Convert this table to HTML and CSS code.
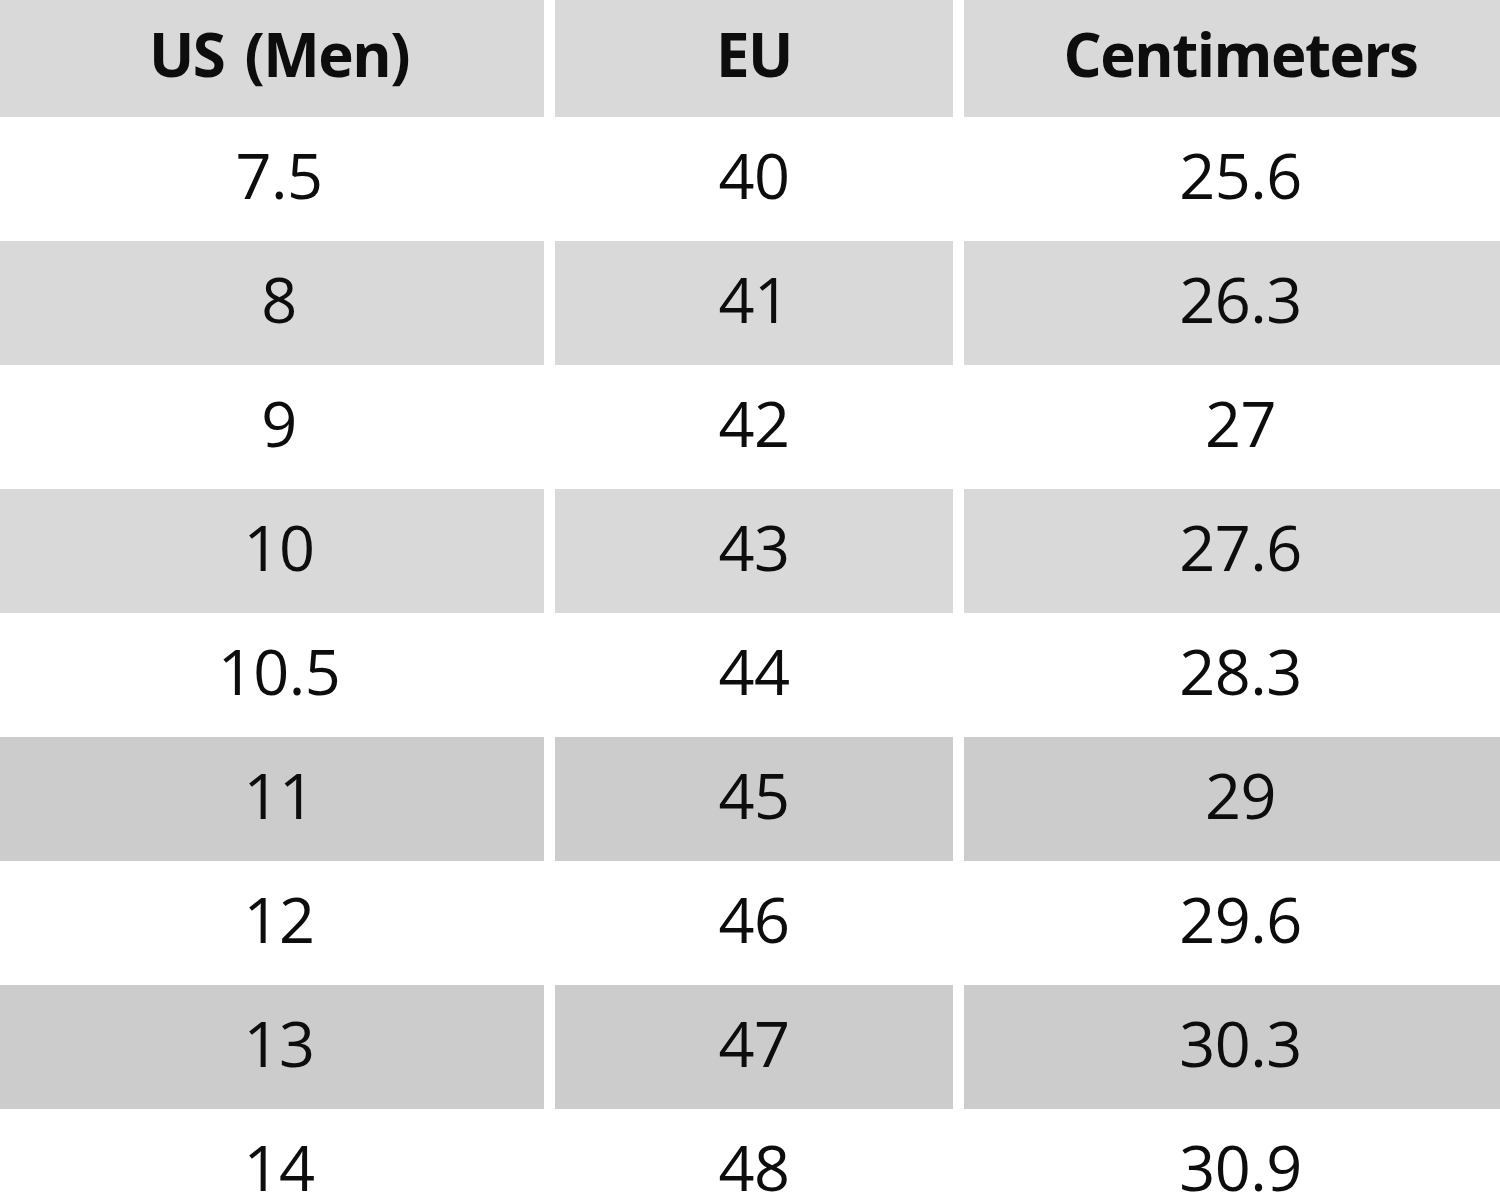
FILE: index.html
```html
<!DOCTYPE html>
<html lang="en">
<head>
<meta charset="utf-8">
<title>Size Chart</title>
<link rel="stylesheet" href="styles.css">
</head>
<body>
<div class="chart">
  <div class="cell head c1">US (Men)</div><div class="cell head">EU</div><div class="cell head c3">Centimeters</div>
  <div class="cell c1">7.5</div><div class="cell">40</div><div class="cell c3">25.6</div>
  <div class="cell shade c1">8</div><div class="cell shade">41</div><div class="cell shade c3">26.3</div>
  <div class="cell c1">9</div><div class="cell">42</div><div class="cell c3">27</div>
  <div class="cell shade c1">10</div><div class="cell shade">43</div><div class="cell shade c3">27.6</div>
  <div class="cell c1">10.5</div><div class="cell">44</div><div class="cell c3">28.3</div>
  <div class="cell dark c1">11</div><div class="cell dark">45</div><div class="cell dark c3">29</div>
  <div class="cell c1">12</div><div class="cell">46</div><div class="cell c3">29.6</div>
  <div class="cell dark c1">13</div><div class="cell dark">47</div><div class="cell dark c3">30.3</div>
  <div class="cell c1">14</div><div class="cell">48</div><div class="cell c3">30.9</div>
</div>
</body>
</html>
```
FILE: styles.css
```css
html, body {
  margin: 0;
  padding: 0;
  background: #ffffff;
  overflow: hidden;
}
.chart {
  display: grid;
  grid-template-columns: 544px 398px 536px;
  grid-template-rows: 117px;
  grid-auto-rows: 124px;
  column-gap: 11px;
  width: 1500px;
  font-family: "Open Sans", "Noto Sans", sans-serif;
  color: #0d0d0d;
}
.cell {
  display: flex;
  align-items: center;
  justify-content: center;
  padding-bottom: 9px;
  font-size: 63px;
  letter-spacing: -0.5px;
  background: #ffffff;
}
.c1 {
  padding-left: 14px;
}
.c3 {
  padding-left: 17px;
}
.head {
  background: #d9d9d9;
  font-weight: 700;
  font-size: 60px;
  letter-spacing: -1.5px;
  word-spacing: 6px;
}
.shade {
  background: #d9d9d9;
}
.dark {
  background: #cccccc;
}
```
